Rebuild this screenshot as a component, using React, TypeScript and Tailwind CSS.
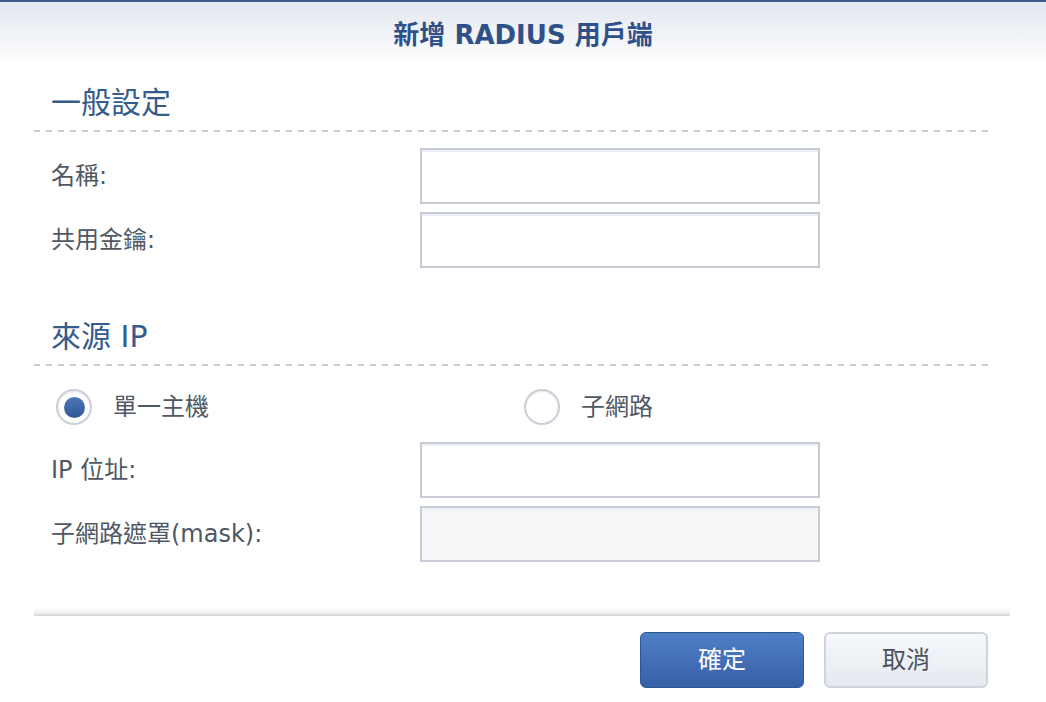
import { useState } from "react";

const font = "font-['DejaVu_Sans','Noto_Sans_CJK_TC',sans-serif]";

function Dashed() {
  return (
    <div className="h-[2px] bg-[linear-gradient(to_right,#c6ccd6_50%,transparent_50%)] bg-[length:12px_2px]" />
  );
}

function Field({ label, disabled }: { label: string; disabled?: boolean }) {
  return (
    <div className="flex h-[56px] items-center pl-[17px]">
      <div className="w-[369px] text-[24px] text-[#4f5864]">{label}</div>
      <input
        disabled={disabled}
        className={
          "h-[56px] w-[400px] border-2 border-[#c7cbd6] shadow-[inset_0_2px_0_#eceff3] outline-none " +
          (disabled ? "bg-[#f5f7f9]" : "bg-white")
        }
      />
    </div>
  );
}

function Radio({ checked, label, onClick }: { checked: boolean; label: string; onClick: () => void }) {
  return (
    <button onClick={onClick} className="flex h-[36px] items-center gap-[21px]">
      <span className="flex h-[36px] w-[36px] items-center justify-center rounded-full border-2 border-[#c9ced8] bg-white shadow-[inset_0_1px_2px_#e6e9ee]">
        {checked && (
          <span className="h-[21px] w-[21px] rounded-full bg-[linear-gradient(to_bottom,#4d77b9,#2f5695)]" />
        )}
      </span>
      <span className="text-[24px] text-[#4f5864]">{label}</span>
    </button>
  );
}

export default function App() {
  const [mode, setMode] = useState<"host" | "subnet">("host");

  return (
    <div className={`flex h-[702px] w-[1046px] flex-col overflow-hidden bg-white ${font}`}>
      <div className="h-[65px] border-t-2 border-[#3a5a8c] bg-[linear-gradient(to_bottom,#e2e7ef,#ffffff)] pt-[15px] text-center text-[26px] font-bold leading-[36px] text-[#30508a]">
        新增 RADIUS 用戶端
      </div>

      <div className="pl-[34px] pr-[56px]">
        <div className="mt-[20px] mb-[9px] h-[36px] pl-[17px] text-[30px] leading-[36px] text-[#355a8c]">
          一般設定
        </div>
        <Dashed />
        <div className="mt-[16px] flex flex-col gap-[8px]">
          <Field label="名稱:" />
          <Field label="共用金鑰:" />
        </div>

        <div className="mt-[51px] mb-[9px] h-[36px] pl-[17px] text-[30px] leading-[36px] text-[#355a8c]">
          來源 IP
        </div>
        <Dashed />
        <div className="mt-[23px] flex pl-[22px]">
          <div className="w-[468px]">
            <Radio checked={mode === "host"} label="單一主機" onClick={() => setMode("host")} />
          </div>
          <Radio checked={mode === "subnet"} label="子網路" onClick={() => setMode("subnet")} />
        </div>
        <div className="mt-[17px] flex flex-col gap-[8px]">
          <Field label="IP 位址:" />
          <Field label="子網路遮罩(mask):" disabled />
        </div>
      </div>

      <div className="mt-[46px] ml-[34px] mr-[36px] h-[8px] border-b-2 border-[#dcdcdc] bg-[linear-gradient(to_bottom,#ffffff,#ededed)]" />

      <div className="mt-[16px] flex justify-end gap-[20px] pr-[58px]">
        <button className="h-[56px] w-[164px] rounded-[6px] border border-[#2f5593] bg-[linear-gradient(to_bottom,#4f7fc7,#3660a6)] text-[24px] text-white">
          確定
        </button>
        <button className="h-[56px] w-[164px] rounded-[6px] border-2 border-[#cdd4de] bg-[linear-gradient(to_bottom,#f6f8fc,#e5e9ef)] text-[24px] text-[#4a5059]">
          取消
        </button>
      </div>
    </div>
  );
}
